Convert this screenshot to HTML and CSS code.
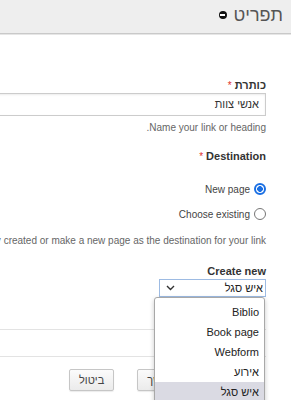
FILE: index.html
```html
<!DOCTYPE html>
<html lang="he" dir="rtl">
<head>
<meta charset="utf-8">
<title>תפריט</title>
<link rel="stylesheet" href="styles.css">
</head>
<body>
<div class="page">
  <header class="bar">
    <span class="bar-title">תפריט</span>
    <span class="bar-icon"></span>
  </header>
  <form class="form">
    <div class="field field-first">
      <div class="label">כותרת <span class="req">*</span></div>
      <div class="input">אנשי צוות</div>
      <div class="desc">Name your link or heading.</div>
    </div>

    <div class="field field-dest">
      <div class="label">Destination <span class="req">*</span></div>
      <div class="radios">
        <div class="radio-row">
          <span class="radio radio-on"></span>
          <span class="radio-text">New page</span>
        </div>
        <div class="radio-row">
          <span class="radio"></span>
          <span class="radio-text">Choose existing</span>
        </div>
      </div>
      <div class="desc desc-wide">Choose content you have already created or make a new page as the destination for your link</div>
    </div>

    <div class="field field-create">
      <div class="label">Create new</div>
      <div class="select">
        <span class="select-value">איש סגל</span>
        <svg class="chev" width="9" height="6" viewBox="0 0 9 6"><path d="M1 1 L4.5 4.5 L8 1" fill="none" stroke="#333" stroke-width="1.4"/></svg>
        <ul class="menu">
          <li class="menu-item">Biblio</li>
          <li class="menu-item">Book page</li>
          <li class="menu-item">Webform</li>
          <li class="menu-item">אירוע</li>
          <li class="menu-item menu-item-active">איש סגל</li>
        </ul>
      </div>
    </div>

    <div class="box"></div>

    <div class="actions">
      <button type="button" class="btn">שמירה והמשך</button>
      <button type="button" class="btn">ביטול</button>
    </div>
  </form>
</div>
</body>
</html>
```

FILE: styles.css
```css
* { box-sizing: border-box; }

html, body {
  margin: 0;
  padding: 0;
  background: #ffffff;
}

body {
  font-family: "Liberation Sans", Arial, sans-serif;
  color: #333333;
}

.page {
  width: 291px;
  height: 400px;
  overflow: hidden;
  position: relative;
  background: #ffffff;
}

/* header bar */
.bar {
  display: flex;
  align-items: center;
  gap: 7px;
  height: 34px;
  padding: 0 8px 3px 0;
  background: #eeeeee;
  border-bottom: 1px solid #c9c9c9;
  box-shadow: 0 1px 0 #e6e6e6;
}

.bar-title {
  font-size: 18px;
  line-height: 20px;
  color: #555555;
}

.bar-icon {
  position: relative;
  width: 8px;
  height: 8px;
  border-radius: 50%;
  background: #111111;
  display: flex;
  align-items: center;
  justify-content: center;
}

.bar-icon::after {
  content: "";
  width: 5px;
  height: 2px;
  background: #ffffff;
}

/* form */
.form {
  padding: 0 25px 0 0;
}

.field-first { margin-top: 44px; }
.field-dest { margin-top: 15px; }
.field-create { margin-top: 17px; }

.label {
  font-size: 11px;
  line-height: 14px;
  font-weight: bold;
  color: #333333;
  white-space: nowrap;
}

.req {
  color: #e0302a;
  font-size: 10px;
  font-weight: normal;
}

.input {
  width: 420px;
  height: 23px;
  border: 1px solid #cccccc;
  box-shadow: inset 0 1px 2px rgba(0, 0, 0, 0.08);
  padding: 0 6px;
  font-size: 11px;
  line-height: 21px;
  color: #333333;
}

.desc {
  margin-top: 5px;
  font-size: 10px;
  line-height: 13px;
  color: #666666;
  white-space: nowrap;
}

.desc-wide { margin-top: 12px; }

/* radios */
.radios {
  margin-top: 17px;
  display: flex;
  flex-direction: column;
  gap: 9px;
}

.radio-row {
  display: flex;
  align-items: center;
  gap: 4px;
  height: 16px;
}

.radio {
  width: 12px;
  height: 12px;
  border-radius: 50%;
  border: 1.5px solid #767676;
  background: #ffffff;
}

.radio-on {
  border: 2px solid #1a6fe3;
  background: radial-gradient(circle, #1a6fe3 0 2.6px, #ffffff 3.1px);
}

.radio-text {
  font-size: 10px;
  line-height: 13px;
  color: #444444;
}

/* select */
.select {
  position: relative;
  margin-top: 1px;
  width: 107px;
  height: 18px;
  border: 1px solid #9dbbe3;
  display: flex;
  align-items: center;
  justify-content: space-between;
  padding: 0 2px 0 6px;
  background: #ffffff;
}

.select-value {
  font-size: 11px;
  line-height: 14px;
  color: #222222;
}

.chev { display: block; }

.menu {
  position: absolute;
  top: 17px;
  right: 0;
  width: 111px;
  margin: 0;
  padding: 4px 0 0 0;
  list-style: none;
  background: #ffffff;
  border: 1px solid #a8a8a8;
  border-radius: 3px 3px 0 0;
  box-shadow: 0 2px 5px rgba(0, 0, 0, 0.22);
  z-index: 5;
}

.menu-item {
  height: 20px;
  line-height: 20px;
  padding: 0 5px 0 0;
  font-size: 11px;
  color: #222222;
}

.menu-item-active {
  background: #dadae3;
}

/* empty box */
.box {
  margin-top: 32px;
  width: 420px;
  height: 28px;
  border-top: 1px solid #e3e3e3;
  border-bottom: 1px solid #e3e3e3;
}

/* buttons */
.actions {
  margin-top: 12px;
  display: flex;
  justify-content: flex-end;
  gap: 23px;
  padding-left: 69px;
}

.btn {
  height: 22px;
  padding: 0 9px;
  font-family: "Liberation Sans", Arial, sans-serif;
  font-size: 11px;
  color: #444444;
  background: linear-gradient(#fbfbfb, #ebebeb);
  border: 1px solid #c6c6c6;
  border-radius: 2px;
  box-shadow: 0 1px 1px rgba(0, 0, 0, 0.08);
}
```
